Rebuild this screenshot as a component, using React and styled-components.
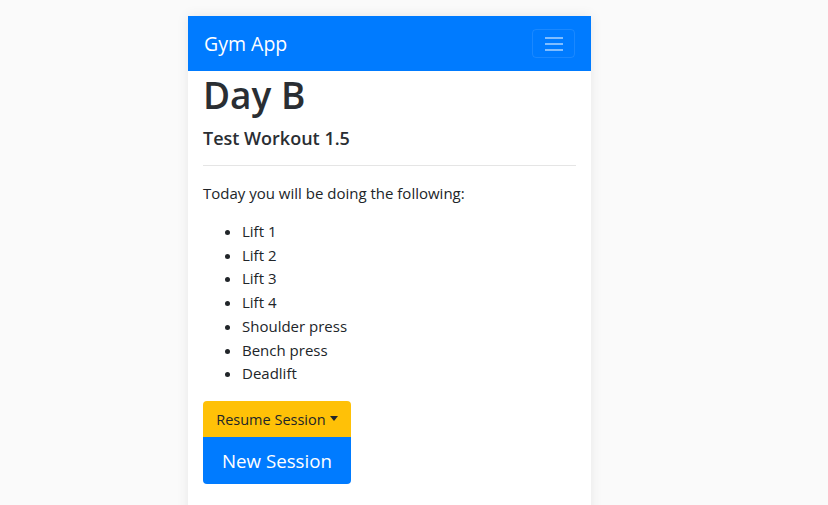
import React from 'react';
import styled, { createGlobalStyle } from 'styled-components';

const GlobalStyle = createGlobalStyle`
  html, body {
    margin: 0;
    padding: 0;
    background: #fafafa;
    font-family: "Open Sans", "Liberation Sans", sans-serif;
    color: #212529;
  }
`;

const Page = styled.div`
  padding: 16px 0 0 188px;
  height: 505px;
  box-sizing: border-box;
  overflow: hidden;
`;

const Card = styled.div`
  width: 403px;
  min-height: 520px;
  background: #fff;
  box-shadow: 0 0 12px rgba(0, 0, 0, 0.08);
`;

const Navbar = styled.nav`
  display: flex;
  align-items: center;
  justify-content: space-between;
  height: 55px;
  padding: 0 16px;
  background: #007bff;
  box-sizing: border-box;
`;

const Brand = styled.span`
  color: #fff;
  font-size: 19.5px;
  line-height: 30px;
`;

const Toggler = styled.button`
  width: 43px;
  height: 29px;
  display: flex;
  align-items: center;
  justify-content: center;
  background: transparent;
  border: 1px solid rgba(255, 255, 255, 0.1);
  border-radius: 4px;
  padding: 0;
`;

const Content = styled.main`
  padding: 0 15px;
`;

const Title = styled.h1`
  margin: 0;
  font-size: 37px;
  font-weight: 600;
  line-height: 48px;
  color: #2a2e33;
`;

const Subtitle = styled.h5`
  margin: 7px 0 0;
  font-size: 18px;
  font-weight: 600;
  line-height: 24px;
  color: #2a2e33;
`;

const Rule = styled.hr`
  margin: 15px 0 15px;
  border: 0;
  border-top: 1px solid rgba(0, 0, 0, 0.1);
`;

const Text = styled.p`
  margin: 0 0 15px;
  font-size: 15px;
  line-height: 24px;
`;

const List = styled.ul`
  margin: 0 0 15px;
  padding-left: 39px;
  font-size: 15px;
  line-height: 23.7px;
`;

const ButtonGroup = styled.div`
  display: inline-flex;
  flex-direction: column;
  align-items: stretch;
`;

const Button = styled.button`
  border: 0;
  font-family: inherit;
  background: ${p => (p.$variant === 'warning' ? '#ffc107' : '#007bff')};
  color: ${p => (p.$variant === 'warning' ? '#212529' : '#fff')};
  font-size: ${p => (p.$large ? '18.7px' : '14.5px')};
  height: ${p => (p.$large ? '47px' : '36px')};
  padding: ${p => (p.$large ? '0 19px' : '2px 12px 0')};
  border-radius: ${p => (p.$large ? '0 0 4px 4px' : '4px 4px 0 0')};
  display: flex;
  align-items: center;
  justify-content: center;
  gap: 4px;
`;

const Caret = styled.span`
  width: 0;
  height: 0;
  border-left: 4px solid transparent;
  border-right: 4px solid transparent;
  border-top: 5px solid #212529;
  margin-top: -2px;
`;

const lifts = ['Lift 1', 'Lift 2', 'Lift 3', 'Lift 4', 'Shoulder press', 'Bench press', 'Deadlift'];

export default function App() {
  return (
    <>
      <GlobalStyle />
      <Page>
        <Card>
          <Navbar>
            <Brand>Gym App</Brand>
            <Toggler>
              <svg width="22" height="18" viewBox="0 0 22 18">
                <path d="M2 3h18M2 9h18M2 15h18" stroke="rgba(255,255,255,0.5)" strokeWidth="2" />
              </svg>
            </Toggler>
          </Navbar>
          <Content>
            <Title>Day B</Title>
            <Subtitle>Test Workout 1.5</Subtitle>
            <Rule />
            <Text>Today you will be doing the following:</Text>
            <List>
              {lifts.map(l => (
                <li key={l}>{l}</li>
              ))}
            </List>
            <ButtonGroup>
              <Button $variant="warning">
                Resume Session <Caret />
              </Button>
              <Button $large>New Session</Button>
            </ButtonGroup>
          </Content>
        </Card>
      </Page>
    </>
  );
}
